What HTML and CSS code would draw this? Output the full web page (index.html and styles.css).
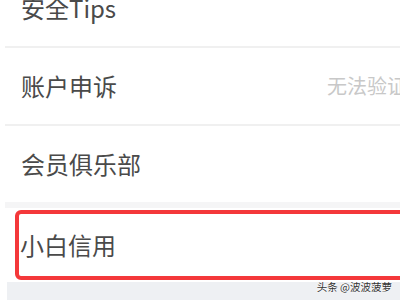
FILE: index.html
```html
<!DOCTYPE html>
<html lang="zh-CN">
<head>
<meta charset="utf-8">
<link rel="stylesheet" href="styles.css">
</head>
<body>
<div class="page">
  <div class="list">
    <div class="row row-first"><span class="label">安全Tips</span></div>
    <div class="row"><span class="label">账户申诉</span><span class="hint">无法验证</span></div>
    <div class="row row-band"><span class="label">会员俱乐部</span></div>
    <div class="row row-mark"><div class="mark"><span class="label">小白信用</span></div></div>
  </div>
  <div class="footer"></div>
  <div class="watermark">头条 @波波菠萝</div>
</div>
</body>
</html>
```
FILE: styles.css
```css
html, body {
  margin: 0;
  padding: 0;
  background: #ffffff;
  overflow: hidden;
  width: 400px;
  height: 300px;
}
body {
  font-family: "Noto Sans CJK SC", "Noto Sans", sans-serif;
  color: #4a4a4a;
}
.page {
  position: relative;
  width: 400px;
  height: 300px;
  overflow: hidden;
}
.list {
  margin-top: -30px;
  margin-left: 5px;
  width: 402px;
}
.row {
  display: flex;
  align-items: center;
  height: 76px;
  border-bottom: 2px solid #f0f0f0;
  padding-left: 16px;
  box-sizing: content-box;
}
.label {
  font-size: 24px;
  line-height: 24px;
  color: #4a4a4a;
}
.hint {
  margin-left: auto;
  font-size: 20px;
  line-height: 20px;
  color: #c8c8c8;
  white-space: nowrap;
}
.row-band {
  border-bottom: 6px solid #f5f5f6;
}
.row-mark {
  height: 74px;
  padding-left: 10px;
  border-bottom: none;
  align-items: center;
}
.mark {
  flex: 1;
  height: 62px;
  margin-right: -20px;
  border: 4px solid #f4383a;
  border-radius: 6px;
  display: flex;
  align-items: center;
  padding-left: 1px;
}
.footer {
  margin-left: 7px;
  height: 20px;
  background: #eef0f3;
}
.watermark {
  position: absolute;
  right: 8px;
  bottom: 7px;
  font-size: 10.5px;
  line-height: 12px;
  color: #333333;
  text-shadow: 0 0 2px #ffffff, 0 0 2px #ffffff;
  white-space: nowrap;
}
```
